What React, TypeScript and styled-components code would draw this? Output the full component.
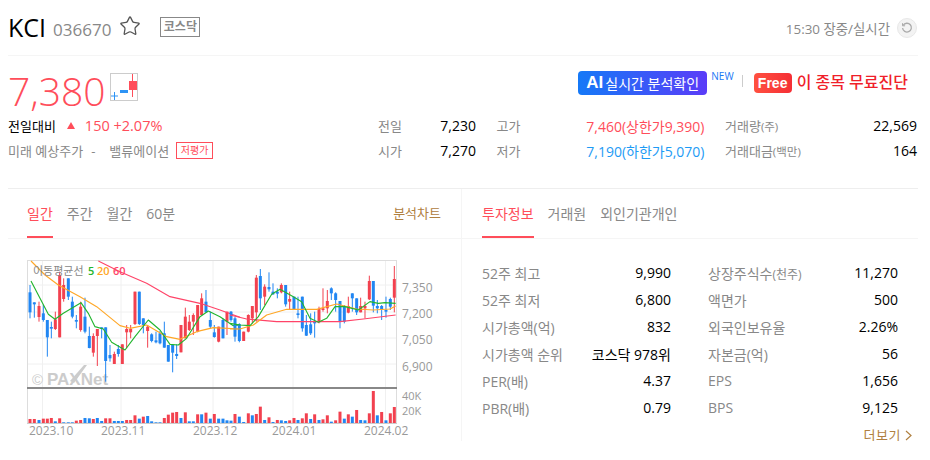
import { Fragment } from "react";
import { Star } from "lucide-react";
import styled, { createGlobalStyle } from "styled-components";

const GlobalStyle = createGlobalStyle`
  body {
    margin: 0;
    background: #fff;
    font-family: "Open Sans", "Noto Sans CJK KR", sans-serif;
    font-size: 14px;
    color: #000;
  }
`;

const Page = styled.div`
  width: 910px;
  margin-left: 8px;
`;

const TopRow = styled.header`
  display: flex;
  align-items: center;
  height: 55px;
  border-bottom: 1px solid #f5f5f5;
`;

const Name = styled.h1`
  margin: 0 7px 0 0;
  font-size: 25px;
  font-weight: 400;
  line-height: 1;
`;

const Code = styled.span`
  font-size: 17px;
  color: #888;
  margin-top: 4px;
  margin-right: 8px;
`;

const FavButton = styled.span`
  display: flex;
  margin-right: 19px;
  margin-top: -3px;
  color: #555;
`;

const Market = styled.span`
  box-sizing: border-box;
  width: 40px;
  height: 20px;
  border: 1px solid #888;
  font-size: 12px;
  font-weight: 700;
  line-height: 17px;
  text-align: center;
  color: #888;
  margin-top: -2px;
`;

const TimeBox = styled.div`
  display: flex;
  align-items: center;
  gap: 7px;
  margin-left: auto;
  font-size: 13.4px;
  color: #888;
`;

const Refresh = styled.span`
  box-sizing: border-box;
  display: flex;
  align-items: center;
  justify-content: center;
  width: 20px;
  height: 20px;
  border-radius: 50%;
  background: #f3f3f3;
  border: 1px solid #e8e8e8;
  margin-right: 1px;
`;

const PriceRow = styled.div`
  display: flex;
  align-items: flex-start;
  box-sizing: border-box;
  height: 60px;
  padding-top: 15px;
`;

const Price = styled.div`
  font-size: 39px;
  font-weight: 300;
  line-height: 1;
  color: #ff4d5a;
  margin-right: 5px;
`;

const MiniCandleBox = styled.span`
  display: flex;
  margin-top: 2px;
`;

const AiButton = styled.a`
  display: flex;
  align-items: center;
  gap: 2px;
  height: 24px;
  width: 129px;
  box-sizing: border-box;
  padding-left: 8px;
  margin-left: auto;
  border-radius: 4px;
  background: linear-gradient(90deg, #1579f7, #5a3cf8);
  color: #fff;
  font-size: 14px;
  white-space: nowrap;
`;

const AiMark = styled.b`
  font-family: "Liberation Sans", sans-serif;
  font-size: 17px;
  font-weight: 700;
`;

const NewMark = styled.sup`
  margin: 0 0 0 4px;
  font-size: 10px;
  line-height: 1;
  color: #1a78f5;
`;

const Sep = styled.i`
  width: 1px;
  height: 12px;
  margin: 4px 11px 0 8px;
  background: #ccc;
`;

const FreeBadge = styled.b`
  box-sizing: border-box;
  width: 38px;
  height: 20px;
  margin: 2px 5px 0 0;
  border-radius: 4px;
  background: linear-gradient(90deg, #ff5040, #f52f35);
  color: #fff;
  font-family: "Liberation Sans", sans-serif;
  font-size: 14px;
  line-height: 20px;
  text-align: center;
`;

const FreeText = styled.strong`
  margin-right: 10px;
  color: #f01f2a;
  font-size: 16px;
  font-weight: 500;
  line-height: 22px;
`;

const SummaryRow = styled.div`
  display: flex;
  height: 72px;
  border-bottom: 1px solid #eee;
`;

const Change = styled.div`
  display: flex;
  flex-direction: column;
  gap: 6px;
  width: 370px;
`;

const ChangeLine = styled.div<{ $tone?: string }>`
  display: flex;
  align-items: center;
  height: 19px;
  font-size: 13px;
  color: ${({ $tone }) => $tone || "#888"};
`;

const Up = styled.i`
  width: 0;
  height: 0;
  margin: 0 10px 0 11px;
  border-left: 4px solid transparent;
  border-right: 4px solid transparent;
  border-bottom: 7px solid #ff4d5a;
`;

const ChangeValue = styled.span`
  font-size: 14.5px;
  color: #ff4d5a;
`;

const Dash = styled.span`
  margin: 0 14px 0 8px;
`;

const Tag = styled.span`
  box-sizing: border-box;
  width: 37px;
  height: 17px;
  margin-left: 7px;
  border: 1px solid #ff4d5a;
  color: #ff4d5a;
  font-size: 10px;
  line-height: 14px;
  text-align: center;
`;

const Quotes = styled.dl`
  display: grid;
  grid-template-columns: 98px 208px 192px;
  column-gap: 20.5px;
  grid-auto-rows: 19px;
  row-gap: 6px;
  margin: 0;
`;

const Cell = styled.div`
  display: flex;
  align-items: center;
  justify-content: space-between;
`;

const Term = styled.dt`
  font-size: 13px;
  color: #888;
  small {
    font-size: 11.5px;
  }
`;

const Val = styled.dd<{ $tone?: string }>`
  margin: 0;
  font-size: 14px;
  color: ${({ $tone }) => $tone || "#000"};
`;

const Panels = styled.div`
  display: grid;
  grid-template-columns: 453px 457px;
`;

const Panel = styled.section<{ $right?: boolean }>`
  height: 252px;
  border-left: ${({ $right }) => ($right ? "1px solid #f5f5f5" : "0")};
`;

const Tabs = styled.nav<{ $right?: boolean }>`
  display: flex;
  align-items: stretch;
  gap: 14px;
  box-sizing: border-box;
  height: 50px;
  padding: 0 20px 0 ${({ $right }) => ($right ? "20px" : "19px")};
  border-bottom: 1px solid #f5f5f5;
`;

const Tab = styled.a<{ $on?: boolean }>`
  height: 49px;
  box-sizing: border-box;
  line-height: 49px;
  border-bottom: 2px solid ${({ $on }) => ($on ? "#ff4d5a" : "transparent")};
  color: ${({ $on }) => ($on ? "#ff4d5a" : "#888")};
  font-size: 14px;
`;

const ChartLink = styled.a`
  margin-left: auto;
  line-height: 49px;
  font-size: 13px;
  color: #b08040;
`;

const ChartBox = styled.div`
  padding: 21px 0 0 19px;
  svg {
    display: block;
  }
`;

const InfoGrid = styled.dl`
  display: grid;
  grid-template-columns: 189px 190px;
  column-gap: 37px;
  grid-auto-rows: 27px;
  margin: 0;
  padding: 20px 0 0 20px;
`;

const InfoTerm = styled.dt`
  font-size: 14px;
  color: #888;
  small {
    font-size: 12px;
  }
`;

const More = styled.a`
  display: flex;
  align-items: center;
  justify-content: flex-end;
  gap: 4px;
  margin: 5px 6px 0 0;
  font-size: 13px;
  line-height: 18px;
  letter-spacing: 0.5px;
  color: #b08040;
`;

// chart data is in 3x crop coordinates: x, body top, body bottom, wick top, wick bottom, up
type Candle = [number, number, number, number, number, number];

const candlesA: Candle[] = [
  [30, 112, 172, 90, 190, 0], [43, 142, 148, 142, 188, 0], [57, 153, 186, 140, 200, 1],
  [70, 175, 195, 150, 200, 0], [82, 195, 247, 195, 305, 0], [94, 216, 221, 200, 250, 0],
  [106, 193, 222, 170, 225, 1], [119, 60, 247, 50, 247, 1], [131, 90, 132, 70, 140, 1],
  [145, 70, 125, 70, 135, 0], [157, 140, 185, 125, 190, 0], [169, 195, 200, 180, 220, 0],
  [182, 155, 225, 140, 230, 1], [195, 185, 230, 128, 235, 0], [208, 243, 279, 215, 280, 0],
  [220, 243, 293, 235, 305, 1], [232, 222, 243, 222, 333, 1], [245, 217, 217, 217, 250, 0],
  [257, 217, 318, 217, 380, 0], [270, 300, 310, 270, 320, 0], [283, 297, 327, 290, 327, 1],
  [295, 282, 297, 270, 305, 0], [307, 268, 327, 268, 327, 1], [320, 222, 232, 210, 280, 1],
  [332, 222, 232, 210, 250, 1], [345, 110, 207, 110, 210, 1], [358, 110, 207, 110, 210, 0],
  [370, 190, 210, 190, 235, 0], [383, 215, 228, 210, 278, 1], [395, 238, 258, 235, 262, 0],
  [408, 256, 262, 230, 265, 0], [420, 235, 265, 228, 268, 0], [433, 235, 278, 200, 278, 0],
  [445, 270, 320, 270, 320, 0], [458, 270, 293, 270, 352, 0], [470, 297, 303, 268, 312, 0],
  [483, 210, 292, 210, 292, 1], [496, 185, 250, 158, 250, 1], [508, 200, 225, 180, 228, 1],
  [520, 180, 200, 175, 240, 1], [533, 150, 230, 150, 232, 1], [545, 130, 180, 115, 180, 1],
  [558, 140, 172, 105, 172, 0], [571, 195, 215, 170, 220, 0], [583, 232, 246, 210, 248, 0],
  [596, 215, 260, 215, 262, 1], [609, 195, 250, 190, 250, 0], [621, 170, 200, 170, 240, 1],
];

const candlesB: Candle[] = [
  [3, 170, 195, 168, 200, 0], [15, 190, 245, 185, 260, 0], [28, 207, 258, 205, 262, 0],
  [41, 230, 258, 230, 258, 1], [55, 180, 230, 178, 232, 1], [67, 153, 190, 153, 205, 1],
  [79, 68, 172, 60, 200, 1], [91, 63, 130, 42, 165, 0], [104, 95, 125, 88, 150, 1],
  [117, 96, 103, 52, 110, 0], [129, 110, 118, 85, 120, 0], [142, 110, 116, 100, 130, 0],
  [154, 90, 112, 85, 115, 1], [167, 90, 148, 90, 155, 0], [179, 132, 140, 110, 165, 1],
  [192, 125, 165, 125, 165, 0], [204, 175, 180, 125, 190, 0], [217, 125, 220, 125, 230, 0],
  [229, 210, 242, 180, 243, 0], [242, 208, 235, 175, 240, 0], [254, 200, 205, 170, 248, 0],
  [267, 162, 202, 155, 205, 1], [279, 160, 163, 100, 170, 1], [292, 138, 160, 105, 175, 1],
  [304, 100, 115, 97, 135, 0], [317, 115, 135, 112, 170, 0], [330, 138, 200, 138, 220, 0],
  [343, 155, 200, 150, 205, 0], [355, 153, 173, 125, 175, 1], [367, 115, 130, 115, 170, 0],
  [380, 130, 172, 130, 180, 0], [392, 153, 172, 128, 172, 1], [405, 153, 160, 140, 190, 1],
  [418, 78, 133, 62, 135, 1], [430, 78, 152, 78, 172, 0], [442, 153, 160, 135, 175, 0],
  [455, 153, 163, 150, 195, 0], [468, 165, 170, 125, 188, 0], [481, 132, 155, 128, 165, 0],
  [493, 72, 128, 33, 172, 1],
];

const volumesA: [number, number, number][] = [
  [30, 13, 1], [43, 13, 1], [57, 10, 0], [70, 14, 1], [82, 14, 1], [94, 16, 1], [106, 6, 0],
  [119, 15, 1], [131, 3, 0], [145, 3, 0], [157, 3, 0], [169, 8, 1], [182, 10, 1], [195, 16, 0],
  [208, 15, 0], [220, 13, 1], [232, 16, 0], [245, 7, 0], [257, 15, 1], [270, 15, 1], [283, 7, 0],
  [295, 7, 0], [307, 7, 0], [320, 10, 1], [332, 10, 1], [345, 24, 1], [358, 14, 0], [370, 20, 1],
  [383, 22, 0], [395, 6, 0], [408, 3, 0], [420, 3, 0], [433, 16, 1], [445, 26, 1], [458, 32, 1],
  [470, 34, 1], [483, 16, 0], [496, 33, 1], [508, 6, 0], [520, 6, 0], [533, 27, 1], [545, 27, 0],
  [558, 32, 1], [571, 14, 0], [583, 28, 1], [596, 14, 0], [609, 14, 0], [621, 9, 0],
];

const volumesB: [number, number, number][] = [
  [3, 8, 0], [15, 28, 1], [28, 20, 0], [41, 4, 0], [55, 30, 1], [67, 24, 0], [79, 28, 1], [91, 50, 1],
  [104, 10, 0], [117, 18, 1], [129, 4, 0], [142, 10, 1], [154, 9, 0], [167, 7, 0], [179, 9, 1],
  [192, 16, 1], [204, 10, 0], [217, 15, 1], [229, 30, 1], [242, 13, 0], [254, 27, 1], [267, 10, 0],
  [279, 12, 1], [292, 24, 1], [304, 5, 0], [317, 9, 1], [330, 35, 1], [343, 14, 0], [355, 27, 1],
  [367, 20, 0], [380, 40, 1], [392, 10, 0], [405, 9, 0], [418, 30, 1], [430, 97, 1], [442, 24, 0],
  [455, 34, 1], [468, 9, 0], [481, 30, 1], [493, 49, 1],
];

const RED = "#f2414f";
const BLUE = "#2186f2";

const MA_A = {
  green: "33,78 60,130 85,178 105,193 130,175 183,143 205,175 225,215 250,222 275,262 315,285 345,245 385,195 420,225 450,268 475,270 500,250 540,185 565,168 600,185 640,212 660,210",
  orange: "33,18 75,60 115,90 180,125 230,155 300,212 330,220 380,210 440,245 480,253 530,230 580,218 660,222",
  red: "235,18 300,50 380,85 450,125 540,145 600,165 660,187",
};

const MA_B = {
  green: "0,205 30,210 60,212 85,185 125,118 150,103 190,125 215,140 240,190 265,202 290,190 315,155 345,155 385,165 420,140 445,145 465,143 497,145",
  orange: "0,222 30,222 70,210 110,180 170,163 260,163 320,147 380,162 430,165 480,162 497,153",
  red: "0,180 50,192 140,200 250,200 330,200 400,192 497,180",
};

const Candles = ({ data, vols }: { data: Candle[]; vols: [number, number, number][] }) => (
  <>
    {data.map(([x, t, b, wt, wb, up]) => (
      <g key={x} fill={up ? RED : BLUE}>
        <rect x={x - 1.5} y={wt} width={3} height={wb - wt} />
        <rect x={x - 4.5} y={t} width={9} height={Math.max(b - t, 5)} />
      </g>
    ))}
    {vols.map(([x, h, up]) => (
      <rect key={x} x={x - 4.5} y={505 - h} width={9} height={h} fill={up ? RED : BLUE} />
    ))}
  </>
);

const Lines = ({ set }: { set: typeof MA_A }) => (
  <g fill="none" strokeWidth={3.4} strokeLinejoin="round">
    <polyline points={set.red} stroke="#ff4468" />
    <polyline points={set.orange} stroke="#ffa726" />
    <polyline points={set.green} stroke="#22b52e" />
  </g>
);

const StockChart = () => (
  <svg width={410} height={186} viewBox="27 260 410 186" fontFamily="'Open Sans', 'Noto Sans CJK KR', sans-serif">
    <rect x={27.5} y={260.5} width={369} height={162.5} fill="#fff" stroke="#ddd" />
    <g stroke="#f0f0f0">
      <path d="M28 285H396M28 312H396M28 338H396M28 364H396" />
      <path d="M42.5 261V423M121 261V423M213 261V423M293 261V423M385.5 261V423" />
    </g>
    <g fill="#ccc" fontFamily="'Liberation Sans', sans-serif">
      <text x={32} y={385} fontSize={15}>©</text>
      <text x={47} y={385} fontSize={17} fontWeight={700}>PAXNet</text>
      <path d="M70 381L84 365L87 365L74 383Z" />
    </g>
    <g transform="translate(20 255) scale(0.3333)">
      <Candles data={candlesA} vols={volumesA} />
      <Lines set={MA_A} />
    </g>
    <g transform="translate(230 255) scale(0.3333)">
      <Candles data={candlesB} vols={volumesB} />
      <Lines set={MA_B} />
    </g>
    <rect x={27} y={387} width={370} height={2} fill="#888" />
    <rect x={27} y={423} width={370} height={1} fill="#ccc" />
    <g fontSize={11}>
      <text x={33} y={275} fill="#888">이동평균선</text>
      <text x={88} y={275} fill="#22b52e" fontWeight={600}>5</text>
      <text x={97} y={275} fill="#ffa726" fontWeight={600}>20</text>
      <text x={113} y={275} fill="#ff4468" fontWeight={600}>60</text>
    </g>
    <g fontSize={12} fill="#999">
      <text x={402} y={292}>7,350</text>
      <text x={402} y={318}>7,200</text>
      <text x={402} y={344}>7,050</text>
      <text x={402} y={371}>6,900</text>
      <text x={402} y={400} fontSize={11}>40K</text>
      <text x={402} y={415} fontSize={11}>20K</text>
      <text x={29} y={435}>2023.10</text>
      <text x={101} y={435}>2023.11</text>
      <text x={193} y={435}>2023.12</text>
      <text x={272} y={435}>2024.01</text>
      <text x={364} y={435}>2024.02</text>
    </g>
  </svg>
);

const MiniCandle = () => (
  <svg width={28} height={28} viewBox="0 0 28 28">
    <rect x={0.5} y={0.5} width={27} height={27} fill="#fff" stroke="#ccc" />
    <path d="M1 23H8M4.5 19V27" stroke="#2e94f5" />
    <rect x={10} y={17} width={8} height={3} fill="#2e94f5" />
    <path d="M22.5 1V24" stroke="#ff4d5a" />
    <rect x={19} y={8} width={8} height={9} fill="#ff4d5a" />
  </svg>
);

const info = [
  ["52주 최고", "", "9,990", "상장주식수", "(천주)", "11,270"],
  ["52주 최저", "", "6,800", "액면가", "", "500"],
  ["시가총액(억)", "", "832", "외국인보유율", "", "2.26%"],
  ["시가총액 순위", "", "코스닥 978위", "자본금(억)", "", "56"],
  ["PER(배)", "", "4.37", "EPS", "", "1,656"],
  ["PBR(배)", "", "0.79", "BPS", "", "9,125"],
];

export default function App() {
  return (
    <Page>
      <GlobalStyle />
      <TopRow>
        <Name>KCI</Name>
        <Code>036670</Code>
        <FavButton>
          <Star size={22} strokeWidth={1.4} />
        </FavButton>
        <Market>코스닥</Market>
        <TimeBox>
          15:30 장중/실시간
          <Refresh>
            <svg width={12} height={12} viewBox="0 0 12 12" fill="none" stroke="#aaa" strokeWidth={1.3}>
              <path d="M2.2 3.4A4.4 4.4 0 1 1 1.6 6" />
              <path d="M1.5 1.2V3.8H4.1" strokeWidth={1} />
            </svg>
          </Refresh>
        </TimeBox>
      </TopRow>

      <PriceRow>
        <Price>7,380</Price>
        <MiniCandleBox>
          <MiniCandle />
        </MiniCandleBox>
        <AiButton>
          <AiMark>AI</AiMark>실시간 분석확인
        </AiButton>
        <NewMark>NEW</NewMark>
        <Sep />
        <FreeBadge>Free</FreeBadge>
        <FreeText>이 종목 무료진단</FreeText>
      </PriceRow>

      <SummaryRow>
        <Change>
          <ChangeLine $tone="#000">
            전일대비
            <Up />
            <ChangeValue>150 +2.07%</ChangeValue>
          </ChangeLine>
          <ChangeLine>
            미래 예상주가
            <Dash>-</Dash>
            밸류에이션
            <Tag>저평가</Tag>
          </ChangeLine>
        </Change>
        <Quotes>
          <Cell><Term>전일</Term><Val>7,230</Val></Cell>
          <Cell><Term>고가</Term><Val $tone="#ff4d5a">7,460(상한가9,390)</Val></Cell>
          <Cell><Term>거래량<small>(주)</small></Term><Val>22,569</Val></Cell>
          <Cell><Term>시가</Term><Val>7,270</Val></Cell>
          <Cell><Term>저가</Term><Val $tone="#1e9bf5">7,190(하한가5,070)</Val></Cell>
          <Cell><Term>거래대금<small>(백만)</small></Term><Val>164</Val></Cell>
        </Quotes>
      </SummaryRow>

      <Panels>
        <Panel>
          <Tabs>
            <Tab $on>일간</Tab>
            <Tab>주간</Tab>
            <Tab>월간</Tab>
            <Tab>60분</Tab>
            <ChartLink>분석차트</ChartLink>
          </Tabs>
          <ChartBox>
            <StockChart />
          </ChartBox>
        </Panel>
        <Panel $right>
          <Tabs $right>
            <Tab $on>투자정보</Tab>
            <Tab>거래원</Tab>
            <Tab>외인기관개인</Tab>
          </Tabs>
          <InfoGrid>
            {info.map(([a, aSmall, aVal, b, bSmall, bVal]) => (
              <Fragment key={a}>
                <Cell>
                  <InfoTerm>{a}<small>{aSmall}</small></InfoTerm>
                  <Val>{aVal}</Val>
                </Cell>
                <Cell>
                  <InfoTerm>{b}<small>{bSmall}</small></InfoTerm>
                  <Val>{bVal}</Val>
                </Cell>
              </Fragment>
            ))}
          </InfoGrid>
          <More>
            더보기
            <svg width={7} height={11} viewBox="0 0 7 11" fill="none" stroke="#b08040" strokeWidth={1.2}>
              <path d="M1 1L6 5.5L1 10" />
            </svg>
          </More>
        </Panel>
      </Panels>
    </Page>
  );
}
